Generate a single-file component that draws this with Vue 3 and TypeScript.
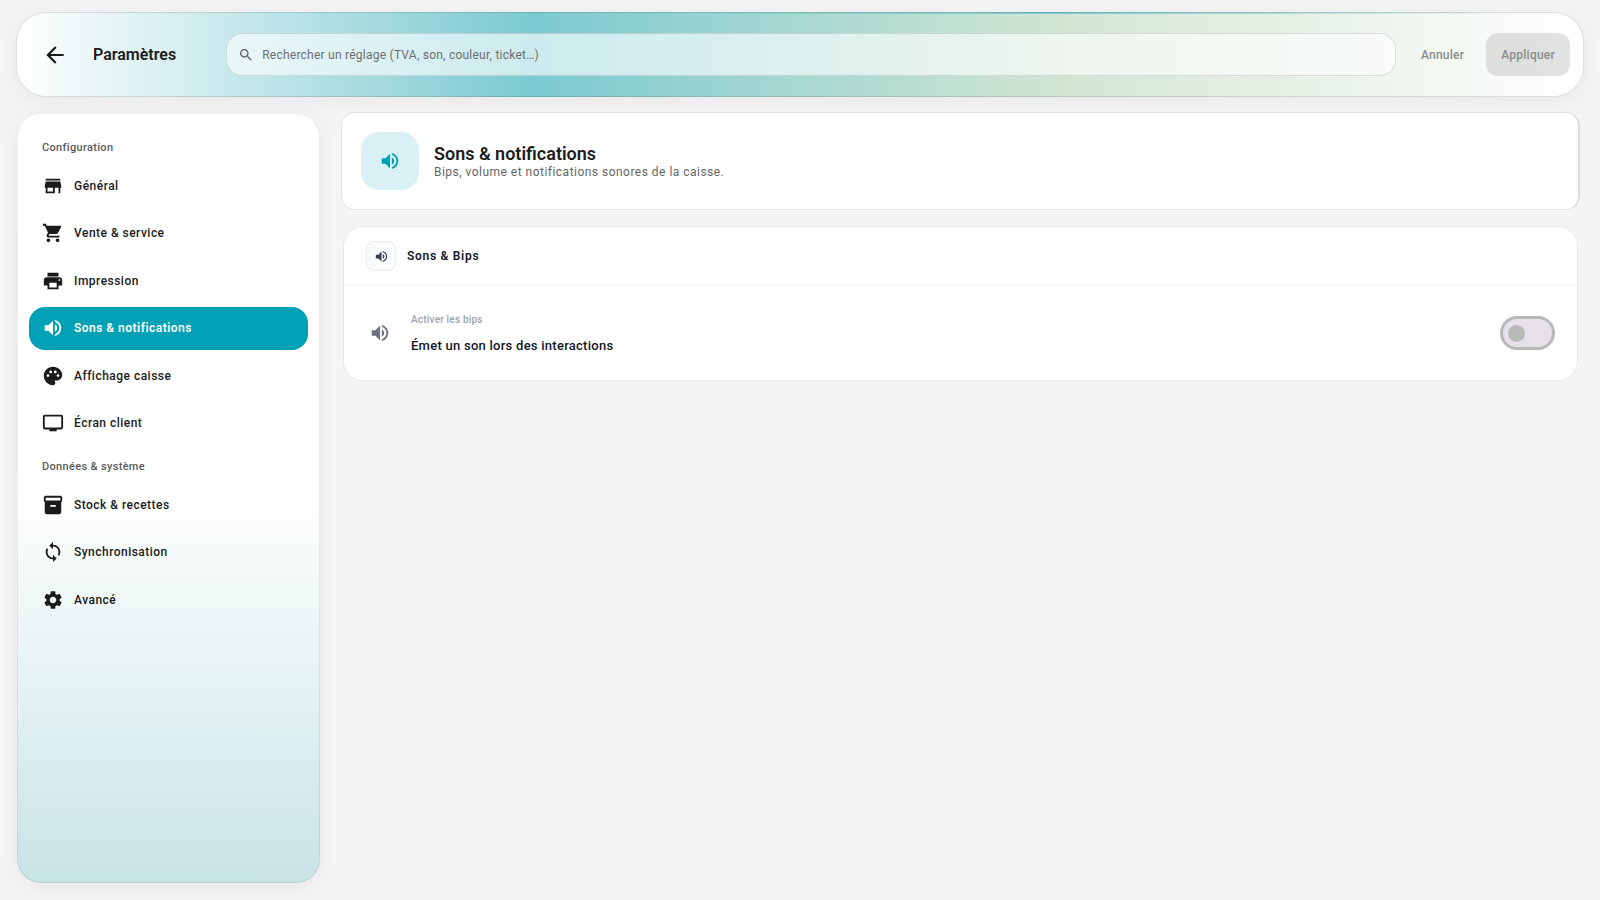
<script setup lang="ts">
import { ref } from 'vue'

interface NavItem {
  id: string
  label: string
  icon: string
}
interface NavGroup {
  title: string
  items: NavItem[]
}

const volumePath =
  'M3 9v6h4l5 5V4L7 9H3zm13.5 3c0-1.77-1.02-3.29-2.5-4.03v8.05c1.48-.73 2.5-2.25 2.5-4.02zM14 3.23v2.06c2.89.86 5 3.54 5 6.71s-2.11 5.85-5 6.71v2.06c4.01-.91 7-4.49 7-8.77s-2.99-7.86-7-8.77z'

const groups: NavGroup[] = [
  {
    title: 'Configuration',
    items: [
      { id: 'general', label: 'Général', icon: 'M20 4H4v2h16V4zm1 10v-2l-1-5H4l-1 5v2h1v6h10v-6h4v6h2v-6h1zm-9 4H6v-4h6v4z' },
      { id: 'vente', label: 'Vente & service', icon: 'M7 18c-1.1 0-1.99.9-1.99 2S5.9 22 7 22s2-.9 2-2-.9-2-2-2zM1 2v2h2l3.6 7.59-1.35 2.45c-.16.28-.25.61-.25.96 0 1.1.9 2 2 2h12v-2H7.42c-.14 0-.25-.11-.25-.25l.03-.12.9-1.63h7.45c.75 0 1.41-.41 1.75-1.03l3.58-6.49c.08-.14.12-.31.12-.48 0-.55-.45-1-1-1H5.21l-.94-2H1zm16 16c-1.1 0-1.99.9-1.99 2s.89 2 1.99 2 2-.9 2-2-.9-2-2-2z' },
      { id: 'impression', label: 'Impression', icon: 'M19 8H5c-1.66 0-3 1.34-3 3v6h4v4h12v-4h4v-6c0-1.66-1.34-3-3-3zm-3 11H8v-5h8v5zm3-7c-.55 0-1-.45-1-1s.45-1 1-1 1 .45 1 1-.45 1-1 1zm-1-9H6v4h12V3z' },
      { id: 'sons', label: 'Sons & notifications', icon: volumePath },
      { id: 'affichage', label: 'Affichage caisse', icon: 'M12 2C6.49 2 2 6.49 2 12s4.49 10 10 10c1.38 0 2.5-1.12 2.5-2.5 0-.61-.23-1.2-.64-1.67-.08-.1-.13-.21-.13-.33 0-.28.22-.5.5-.5H16c3.31 0 6-2.69 6-6 0-4.96-4.49-9-10-9zm5.5 11c-.83 0-1.5-.67-1.5-1.5s.67-1.5 1.5-1.5 1.5.67 1.5 1.5-.67 1.5-1.5 1.5zm-3-4c-.83 0-1.5-.67-1.5-1.5S13.67 6 14.5 6s1.5.67 1.5 1.5S15.33 9 14.5 9zM5 11.5c0-.83.67-1.5 1.5-1.5s1.5.67 1.5 1.5S7.33 13 6.5 13 5 12.33 5 11.5zm6-4c0 .83-.67 1.5-1.5 1.5S8 8.33 8 7.5 8.67 6 9.5 6s1.5.67 1.5 1.5z' },
      { id: 'ecran', label: 'Écran client', icon: 'M21 3H3c-1.1 0-2 .9-2 2v12c0 1.1.9 2 2 2h5v2h8v-2h5c1.1 0 1.99-.9 1.99-2L23 5c0-1.1-.9-2-2-2zm0 14H3V5h18v12z' },
    ],
  },
  {
    title: 'Données & système',
    items: [
      { id: 'stock', label: 'Stock & recettes', icon: 'M20 2H4c-1 0-2 .9-2 2v3.01c0 .72.43 1.34 1 1.69V20c0 1.1 1.1 2 2 2h14c.9 0 2-.9 2-2V8.7c.57-.35 1-.97 1-1.69V4c0-1.1-1-2-2-2zm-5 12H9v-2h6v2zm5-7H4V4h16v3z' },
      { id: 'sync', label: 'Synchronisation', icon: 'M12 4V1L8 5l4 4V6c3.31 0 6 2.69 6 6 0 1.01-.25 1.97-.7 2.8l1.46 1.46C19.54 15.03 20 13.57 20 12c0-4.42-3.58-8-8-8zm0 14c-3.31 0-6-2.69-6-6 0-1.01.25-1.97.7-2.8L5.24 7.74C4.46 8.97 4 10.43 4 12c0 4.42 3.58 8 8 8v3l4-4-4-4v3z' },
      { id: 'avance', label: 'Avancé', icon: 'M19.14 12.94c.04-.3.06-.61.06-.94 0-.32-.02-.64-.07-.94l2.03-1.58c.18-.14.23-.41.12-.61l-1.92-3.32c-.12-.22-.37-.29-.59-.22l-2.39.96c-.5-.38-1.03-.7-1.62-.94l-.36-2.54c-.04-.24-.24-.41-.48-.41h-3.84c-.24 0-.43.17-.47.41l-.36 2.54c-.59.24-1.13.57-1.62.94l-2.39-.96c-.22-.08-.47 0-.59.22L2.74 8.87c-.12.21-.08.47.12.61l2.03 1.58c-.05.3-.09.63-.09.94s.02.64.07.94l-2.03 1.58c-.18.14-.23.41-.12.61l1.92 3.32c.12.22.37.29.59.22l2.39-.96c.5.38 1.03.7 1.62.94l.36 2.54c.05.24.24.41.48.41h3.84c.24 0 .44-.17.47-.41l.36-2.54c.59-.24 1.13-.56 1.62-.94l2.39.96c.22.08.47 0 .59-.22l1.92-3.32c.12-.22.07-.47-.12-.61l-2.01-1.58zM12 15.6c-1.98 0-3.6-1.62-3.6-3.6s1.62-3.6 3.6-3.6 3.6 1.62 3.6 3.6-1.62 3.6-3.6 3.6z' },
    ],
  },
]

const active = ref('sons')
const query = ref('')
const beeps = ref(false)
</script>

<template>
  <div class="app">
    <header class="topbar">
      <button class="back" type="button" aria-label="Retour">
        <svg viewBox="0 0 24 24"><path d="M20 11H7.83l5.59-5.59L12 4l-8 8 8 8 1.41-1.41L7.83 13H20v-2z" /></svg>
      </button>
      <h1>Paramètres</h1>
      <label class="search">
        <svg viewBox="0 0 24 24"><path d="M15.5 14h-.79l-.28-.27C15.41 12.59 16 11.11 16 9.5 16 5.91 13.09 3 9.5 3S3 5.91 3 9.5 5.91 16 9.5 16c1.61 0 3.09-.59 4.23-1.57l.27.28v.79l5 4.99L20.49 19l-4.99-5zm-6 0C7.01 14 5 11.99 5 9.5S7.01 5 9.5 5 14 7.01 14 9.5 11.99 14 9.5 14z" /></svg>
        <input v-model="query" type="text" aria-label="Rechercher un réglage" placeholder="Rechercher un réglage (TVA, son, couleur, ticket…)" />
      </label>
      <button class="cancel" type="button" disabled>Annuler</button>
      <button class="apply" type="button" disabled>Appliquer</button>
    </header>

    <div class="body">
      <nav class="sidebar" aria-label="Réglages">
        <section v-for="g in groups" :key="g.title">
          <h2>{{ g.title }}</h2>
          <div class="items" :class="{ long: g.items.length > 3 }">
            <button
              v-for="item in g.items"
              :key="item.id"
              type="button"
              class="item"
              :class="{ active: item.id === active }"
              @click="active = item.id"
            >
              <svg viewBox="0 0 24 24"><path :d="item.icon" /></svg>
              <span>{{ item.label }}</span>
            </button>
          </div>
        </section>
      </nav>

      <main>
        <section class="hero">
          <div class="hero-icon"><svg viewBox="0 0 24 24"><path :d="volumePath" /></svg></div>
          <div class="hero-text">
            <h2>Sons &amp; notifications</h2>
            <p>Bips, volume et notifications sonores de la caisse.</p>
          </div>
        </section>

        <section class="card">
          <div class="card-head">
            <div class="card-icon"><svg viewBox="0 0 24 24"><path :d="volumePath" /></svg></div>
            <h3>Sons &amp; Bips</h3>
          </div>
          <div class="row">
            <svg viewBox="0 0 24 24"><path :d="volumePath" /></svg>
            <label for="beeps">
              <small>Activer les bips</small>
              <span>Émet un son lors des interactions</span>
            </label>
            <input id="beeps" v-model="beeps" class="switch" type="checkbox" role="switch" />
          </div>
        </section>
      </main>
    </div>
  </div>
</template>

<style>
body {
  background: #f4f4f4;
}
</style>

<style scoped>
.app {
  box-sizing: border-box;
  min-height: 100vh;
  display: flex;
  flex-direction: column;
  gap: 16px;
  padding: 12px 16px 17px;
  font-family: Roboto, "Liberation Sans", sans-serif;
  color: #1c1b1c;
}
.app * {
  box-sizing: border-box;
}
h1, h2, h3, p {
  margin: 0;
}
button, input {
  font-family: inherit;
}
button {
  border: 0;
  background: none;
  padding: 0;
  cursor: pointer;
}
button:disabled {
  cursor: default;
}
svg {
  display: block;
  flex: none;
  fill: currentColor;
}
.topbar {
  display: flex;
  align-items: center;
  padding: 20px 13px 20px 25px;
  border: 1px solid rgba(0, 0, 0, 0.12);
  border-radius: 30px;
  background:
    linear-gradient(90deg, transparent 33%, #7bcad1 65%, transparent 96%) top / 100% 2px no-repeat border-box,
    linear-gradient(90deg, #fff 0%, #7bcad1 33%, #d3e6d2 67%, #fff 100%) border-box;
  box-shadow: 0 4px 20px rgba(0, 0, 0, 0.05);
}
.back {
  width: 28px;
  height: 28px;
  color: #1c1b1c;
}
.back svg {
  width: 26px;
  height: 26px;
}
h1 {
  margin: 0 50px 0 23px;
  font-size: 16px;
  line-height: 24px;
  font-weight: 600;
}
.search {
  flex: 1;
  display: flex;
  align-items: center;
  gap: 8px;
  height: 43px;
  padding: 0 11px;
  border: 1px solid rgba(0, 0, 0, 0.12);
  border-radius: 16px;
  background: rgba(255, 255, 255, 0.62);
  color: #5e6061;
}
.search svg {
  width: 16px;
  height: 16px;
}
.search input {
  flex: 1;
  min-width: 0;
  border: 0;
  padding: 0;
  outline: 0;
  background: none;
  font-size: 12px;
  line-height: 16px;
  letter-spacing: 0.02em;
  color: #1c1b1c;
}
.search input::placeholder {
  color: #6b6e6f;
  opacity: 1;
}
.cancel, .apply {
  height: 43px;
  font-size: 12px;
  font-weight: 500;
  letter-spacing: 0.02em;
  color: #8b8c8b;
}
.cancel {
  padding: 0 22px 0 25px;
}
.apply {
  padding: 0 15px;
  border-radius: 12px;
  background: rgba(28, 27, 28, 0.12);
}
.body {
  flex: 1;
  display: flex;
  align-items: stretch;
  gap: 21px;
  padding: 0 4px 0 1px;
}
.sidebar {
  width: 303px;
  flex: none;
  padding: 26px 11px;
  border: 1px solid rgba(0, 60, 70, 0.09);
  border-radius: 24px;
  background: linear-gradient(180deg, #fff 0%, #fefefe 50%, #e4f2f3 75%, #c8e3e6 100%) border-box;
  box-shadow: 0 4px 20px rgba(0, 0, 0, 0.05);
}
.sidebar h2 {
  padding: 0 13px;
  font-size: 11px;
  line-height: 16px;
  font-weight: 500;
  letter-spacing: 0.03em;
  color: #5c5c5c;
}
.items {
  display: flex;
  flex-direction: column;
  justify-content: space-between;
  min-height: 146px;
  padding-top: 8px;
}
.items.long {
  min-height: 289px;
  margin-bottom: 14px;
}
.item {
  display: flex;
  align-items: center;
  gap: 10px;
  height: 43px;
  padding: 0 13px;
  border-radius: 16px;
  font-size: 12px;
  font-weight: 500;
  letter-spacing: 0.04em;
  color: #1c1b1c;
}
.item svg {
  width: 22px;
  height: 22px;
}
.item.active {
  background: #00a1b5;
  color: #fff;
  font-weight: 600;
}
main {
  flex: 1;
  min-width: 0;
  display: flex;
  flex-direction: column;
  gap: 16px;
}
.hero {
  display: flex;
  align-items: center;
  gap: 15px;
  margin-top: -1px;
  padding: 19px;
  border: 1px solid #e4e4e4;
  border-right: 2px solid #dcdcdc;
  border-radius: 14px;
  background: #fff;
}
.hero-icon {
  display: grid;
  place-items: center;
  width: 58px;
  height: 58px;
  border-radius: 18px;
  background: #d9f1f4;
  color: #00a1b5;
}
.hero-icon svg {
  width: 22px;
  height: 22px;
}
.hero-text {
  padding-top: 2px;
}
.hero h2 {
  font-size: 18px;
  line-height: 20px;
  font-weight: 600;
}
.hero p {
  font-size: 12px;
  line-height: 16px;
  letter-spacing: 0.04em;
  color: #656565;
}
.card {
  margin: 0 2px;
  border: 1px solid #e8e9f0;
  border-radius: 20px;
  background: #fff;
}
.card-head {
  display: flex;
  align-items: center;
  gap: 11px;
  padding: 14px 22px;
  border-bottom: 1px solid #f2f3f5;
}
.card-icon {
  display: grid;
  place-items: center;
  width: 30px;
  height: 30px;
  border: 1px solid #eaebf1;
  border-radius: 8px;
  background: #f9fafc;
  color: #374151;
}
.card-icon svg {
  width: 15px;
  height: 15px;
}
h3 {
  font-size: 12px;
  line-height: 16px;
  font-weight: 600;
  letter-spacing: 0.06em;
  color: #111827;
}
.row {
  display: flex;
  align-items: center;
  padding: 24px 22px;
}
.row > svg {
  width: 22px;
  height: 22px;
  margin: 0 20px 0 3px;
  color: #6b7280;
}
.row label {
  flex: 1;
  display: flex;
  flex-direction: column;
  gap: 8px;
  padding-top: 2px;
}
.row small {
  font-size: 10px;
  line-height: 16px;
  font-weight: 500;
  letter-spacing: 0.02em;
  color: #9ca3af;
}
.row span {
  font-size: 13px;
  line-height: 20px;
  font-weight: 500;
  letter-spacing: 0.02em;
  color: #111827;
}
.switch {
  appearance: none;
  display: flex;
  align-items: center;
  width: 55px;
  height: 34px;
  margin: 0;
  padding: 0 5px;
  border: 3px solid #b9b9b9;
  border-radius: 17px;
  background: #e6e0e9;
}
.switch::before {
  content: "";
  width: 17px;
  height: 17px;
  border-radius: 50%;
  background: #b9b9b9;
}
.switch:checked {
  justify-content: flex-end;
  background: #00a1b5;
  border-color: #00a1b5;
}
.switch:checked::before {
  background: #fff;
}
</style>
